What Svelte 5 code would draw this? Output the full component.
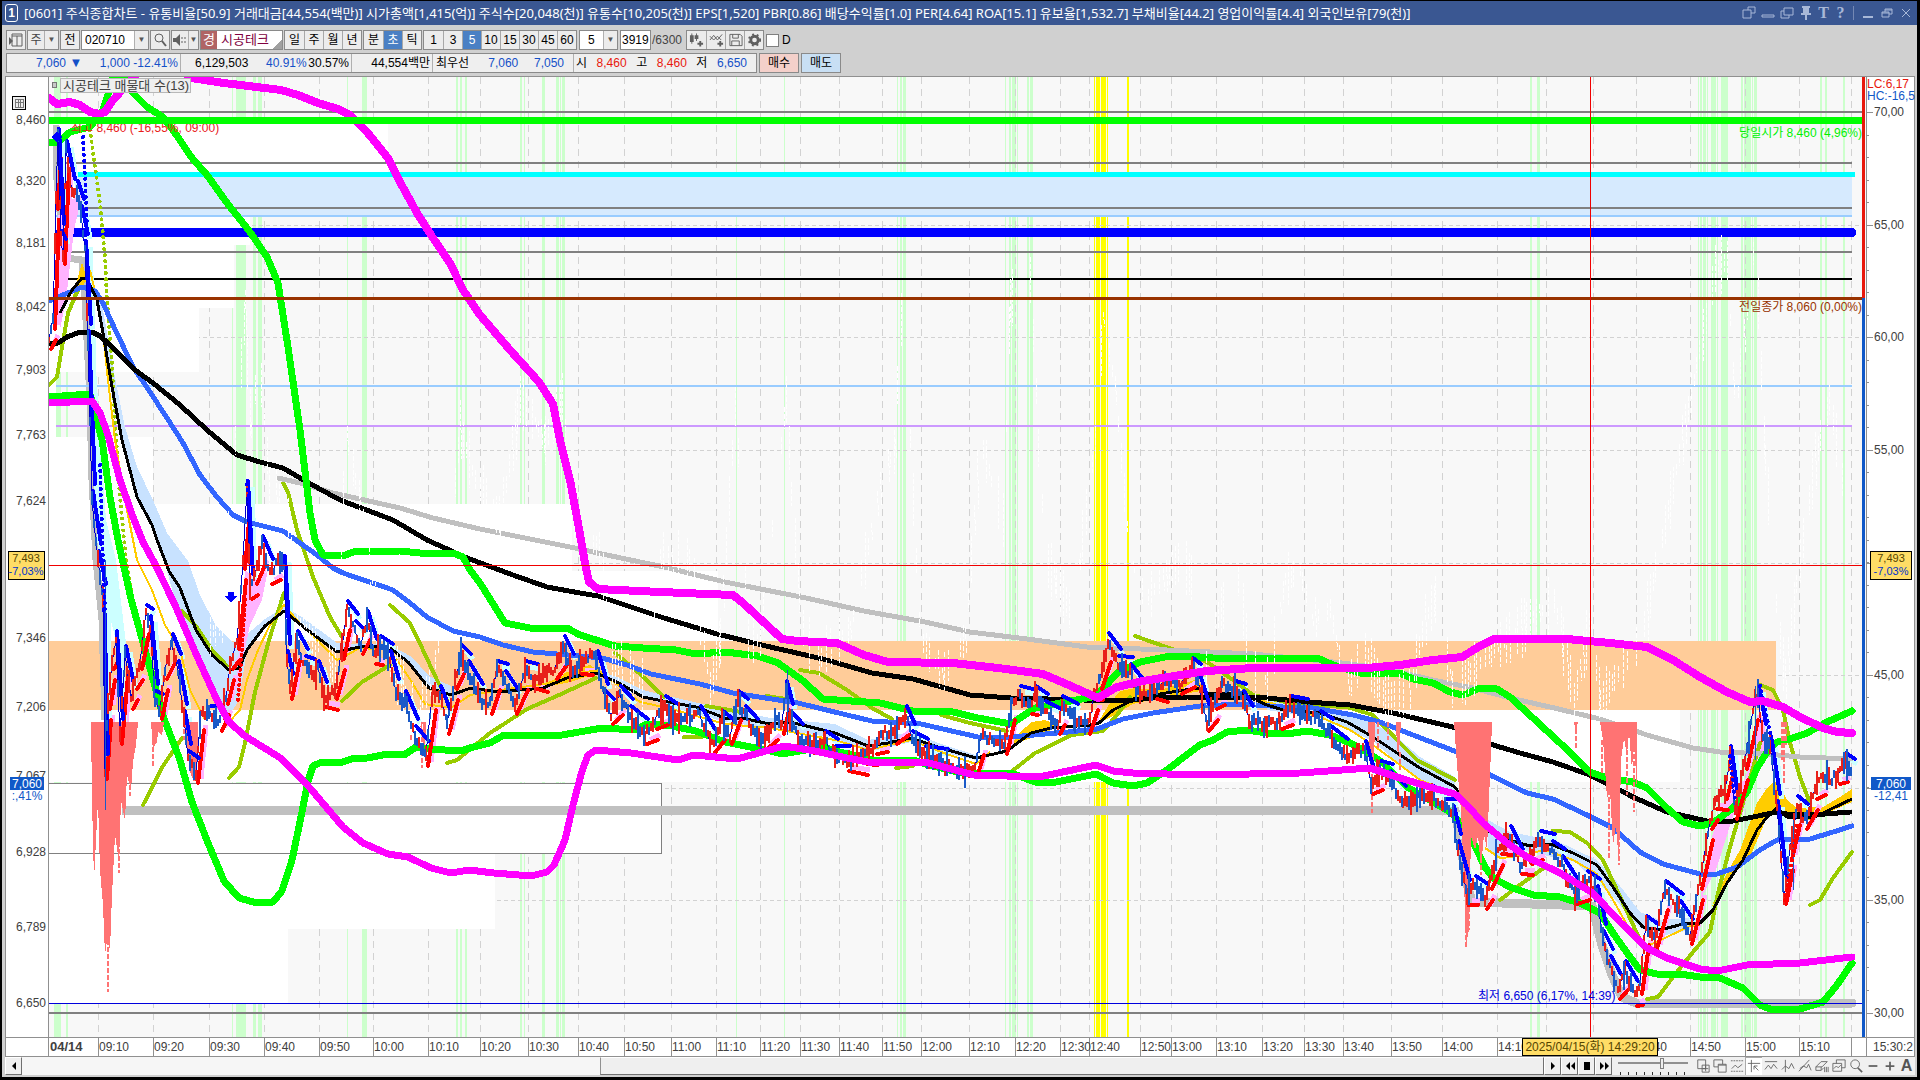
<script lang="ts">
	type Point = [number, number];

	const periods = ['일', '주', '월', '년'];
	const units = ['분', '초', '틱'];
	const steps = ['1', '3', '5', '10', '15', '30', '45', '60'];
	let unit = $state('초');
	let step = $state('5');

	const title =
		'[0601] 주식종합차트 - 유통비율[50.9] 거래대금[44,554(백만)] 시가총액[1,415(억)] 주식수[20,048(천)] 유통수[10,205(천)] EPS[1,520] PBR[0.86] 배당수익률[1.0] PER[4.64] ROA[15.1] 유보율[1,532.7] 부채비율[44.2] 영업이익률[4.4] 외국인보유[79(천)]';

	// x position of every time mark, with its label
	const times: [number, string][] = [
		[98, '09:10'], [153, '09:20'], [209, '09:30'], [264, '09:40'], [319, '09:50'], [373, '10:00'],
		[428, '10:10'], [480, '10:20'], [528, '10:30'], [578, '10:40'], [624, '10:50'], [671, '11:00'],
		[716, '11:10'], [760, '11:20'], [800, '11:30'], [839, '11:40'], [882, '11:50'], [921, '12:00'],
		[969, '12:10'], [1015, '12:20'], [1060, '12:30'], [1089, '12:40'], [1140, '12:50'], [1171, '13:00'],
		[1216, '13:10'], [1262, '13:20'], [1304, '13:30'], [1343, '13:40'], [1391, '13:50'], [1442, '14:00'],
		[1497, '14:10'], [1546, ''], [1593, ''], [1636, '14:40'], [1690, '14:50'], [1745, '15:00'],
		[1799, '15:10'], [1851, '']
	];

	const prices: [number, string][] = [
		[120, '8,460'], [181, '8,320'], [243, '8,181'], [307, '8,042'], [370, '7,903'], [435, '7,763'],
		[501, '7,624'], [638, '7,346'], [707, '7,206'], [776, '7,067'], [852, '6,928'],
		[927, '6,789'], [1003, '6,650']
	];

	const rates: [number, string][] = [
		[112, '70,00'], [225, '65,00'], [337, '60,00'], [450, '55,00'], [563, ''], [675, '45,00'],
		[788, ''], [900, '35,00'], [1013, '30,00']
	];
	const minorTicks = Array.from({ length: 40 }, (_, i) => 112 + Math.round(i * 22.5));

	// signal stripes: x, width
	const stripes: Point[] = [
		[54, 7], [66, 2], [232, 1], [236, 10], [253, 3], [258, 4], [347, 1], [362, 5], [456, 2], [460, 2],
		[465, 2], [520, 2], [524, 1], [542, 3], [556, 3], [560, 1], [562, 3], [736, 1], [784, 1], [897, 1],
		[900, 2], [903, 3], [1005, 1], [1009, 2], [1012, 4], [1017, 1], [1027, 2], [1030, 3], [1530, 2],
		[1537, 3], [1698, 1], [1700, 2], [1703, 3], [1707, 1], [1711, 5], [1717, 1], [1721, 7], [1741, 2],
		[1744, 7], [1752, 1], [1754, 3], [1820, 2], [1825, 2], [1843, 2]
	];
	const yellowStripes: Point[] = [[1094, 1], [1096, 4], [1101, 5], [1107, 1], [1127, 2]];

	// volume profile: top, bottom, right edge
	const profile: [number, number, number][] = [
		[124, 182, 388], [182, 245, 250], [245, 308, 234], [308, 372, 199], [372, 437, 56], [437, 504, 153],
		[504, 571, 572], [571, 641, 718], [710, 782, 1680], [853, 929, 495], [929, 1003, 288]
	];

	const upperBand =
		'49,98 57,104 70,102 80,105 90,112 100,114 105,112 113,100 122,90 140,70 180,70 191,78 224,83 281,90 298,95 318,103 338,109 350,115 367,132 388,158 400,182 417,213 433,238 450,263 463,290 480,315 510,350 539,382 553,404 560,440 570,480 578,523 585,563 589,582 598,589 639,591 684,593 733,595 743,603 782,639 798,641 837,643 864,655 888,662 953,663 998,668 1043,674 1064,683 1098,698 1117,687 1143,681 1187,674 1207,671 1253,668 1367,668 1400,665 1433,660 1462,657 1480,646 1494,639 1567,639 1610,643 1647,647 1673,660 1700,677 1727,692 1750,702 1763,701 1783,707 1800,717 1823,728 1837,732 1852,733';
	const lowerBand =
		'49,403 92,401 100,413 108,435 120,480 133,517 143,542 155,564 175,605 196,654 216,698 229,722 245,736 282,759 310,788 343,827 363,843 388,854 408,857 431,868 451,873 469,870 494,873 531,876 547,872 554,865 565,840 573,805 582,771 588,755 596,750 631,753 678,760 694,755 737,759 784,746 815,751 847,758 868,762 925,762 974,775 1039,777 1096,765 1113,771 1133,773 1200,775 1300,773 1370,768 1400,778 1433,788 1455,794 1467,805 1483,823 1507,843 1527,857 1560,873 1593,893 1620,922 1647,948 1667,958 1700,969 1717,971 1747,965 1800,963 1852,957';
	const upperGreen =
		'49,142 58,142 70,132 90,127 97,118 103,110 108,95 114,74 122,74 130,90 147,107 163,117 173,130 192,158 207,175 227,203 250,232 267,257 278,283 288,347 300,430 310,513 315,540 323,555 343,556 353,552 400,551 420,553 453,553 463,557 470,570 480,583 495,607 505,623 530,628 567,628 580,635 596,640 615,646 643,648 676,650 696,654 725,652 758,656 778,663 802,680 823,699 880,703 913,711 953,712 978,718 1011,724 1035,708 1060,703 1092,697 1103,689 1117,673 1140,662 1170,656 1200,657 1213,658 1320,659 1333,665 1360,673 1400,673 1413,679 1433,683 1450,692 1463,695 1480,688 1497,689 1510,697 1533,718 1560,743 1590,772 1607,778 1633,782 1647,788 1667,808 1683,822 1700,826 1713,823 1733,808 1747,792 1757,768 1767,752 1777,742 1790,739 1807,733 1827,722 1852,711';
	const lowerGreen =
		'49,397 90,394 95,413 102,440 110,497 118,540 131,599 147,657 163,716 180,760 192,802 208,843 224,881 239,898 253,902 273,902 282,891 292,860 302,812 308,781 313,766 322,762 339,763 355,758 367,758 388,754 404,755 416,747 429,749 461,751 473,747 490,743 504,735 562,735 602,728 635,730 647,724 672,726 696,731 725,742 766,750 782,754 823,747 843,753 872,760 913,760 929,765 962,773 1011,773 1035,782 1056,782 1096,774 1113,783 1133,786 1147,783 1167,770 1180,760 1200,745 1213,740 1227,732 1247,730 1267,733 1287,734 1307,731 1330,735 1350,743 1367,752 1383,763 1407,787 1433,802 1450,812 1460,822 1472,840 1485,867 1493,878 1510,887 1533,895 1560,897 1580,903 1600,913 1613,933 1630,957 1640,970 1657,974 1680,974 1700,977 1720,978 1743,988 1760,1005 1770,1009 1800,1009 1823,1002 1837,985 1852,963';
	const longAverage =
		'49,343 58,343 67,337 80,332 92,332 100,336 110,345 135,370 153,383 180,405 207,430 237,455 260,462 283,468 307,482 340,500 393,520 427,540 467,558 513,575 547,587 580,593 598,596 664,618 717,634 766,646 823,659 872,673 913,679 970,695 1011,698 1084,700 1133,700 1153,698 1187,697 1267,698 1307,702 1350,705 1393,713 1427,721 1457,728 1493,745 1520,753 1553,762 1590,775 1633,797 1667,812 1707,821 1733,821 1753,817 1777,812 1787,814 1813,815 1850,812';
	const midAverage =
		'49,301 63,295 82,287 95,291 103,303 113,325 133,367 150,392 167,418 183,443 200,475 217,497 233,515 247,522 283,531 317,555 333,568 343,573 393,590 410,603 427,617 453,631 480,637 503,645 533,652 580,656 602,658 627,665 651,674 700,684 733,693 798,703 847,715 872,721 921,724 978,737 1011,737 1068,732 1097,729 1123,719 1153,713 1200,706 1243,704 1283,707 1313,708 1353,715 1380,722 1413,735 1457,752 1490,775 1527,793 1553,799 1587,815 1613,828 1640,852 1663,864 1700,874 1717,874 1737,867 1760,850 1777,840 1810,839 1833,832 1852,826';
	const slowAverage =
		'278,478 300,483 333,493 400,508 433,518 480,529 580,549 602,554 664,567 725,582 806,598 864,611 925,622 970,632 1027,639 1087,647 1167,650 1253,654 1333,662 1383,668 1433,680 1473,688 1510,698 1550,707 1600,719 1647,735 1693,748 1720,752 1767,754 1800,757 1851,759';
	const fastAverage =
		'60,313 72,290 82,278 87,279 97,300 103,333 112,387 122,440 137,497 152,525 157,540 169,571 180,588 196,630 212,655 229,670 239,668 247,650 265,626 284,611 306,629 337,652 355,648 367,646 390,648 408,662 429,688 451,695 471,688 498,692 543,688 567,678 596,673 619,683 643,697 668,702 696,707 725,718 741,718 770,724 790,722 835,733 868,746 888,743 911,738 941,748 976,758 1007,751 1031,733 1051,728 1090,725 1099,723 1113,710 1133,700 1160,694 1197,688 1210,694 1240,693 1267,705 1283,710 1320,713 1347,722 1373,737 1400,755 1420,768 1455,787 1472,812 1490,832 1513,841 1530,846 1550,844 1573,853 1597,865 1613,887 1630,913 1643,927 1660,930 1687,923 1700,923 1713,910 1727,883 1743,860 1757,830 1767,817 1777,808 1787,817 1813,818 1833,808 1852,799';

	const cloudAreas = [
		'87,279 100,293 113,367 125,427 137,467 153,500 167,533 188,561 200,595 216,626 233,642 245,636 265,619 284,607 302,617 337,643 390,645 412,657 429,676 451,686 451,695 429,688 408,662 390,648 337,652 306,629 284,611 265,626 247,650 239,700 229,716 216,700 205,670 196,650 175,600 160,545 152,525 137,497 122,440 112,387 103,333 97,300',
		'596,670 619,678 643,690 668,696 725,709 770,718 835,724 868,740 911,732 941,744 976,755 976,760 941,752 911,742 868,752 835,738 770,728 725,722 668,706 619,688',
		'1267,698 1320,707 1373,722 1400,740 1420,757 1455,777 1455,792 1420,780 1400,765 1373,741 1320,718 1267,710',
		'1488,820 1510,832 1530,836 1555,840 1597,860 1617,882 1640,912 1660,920 1690,918 1690,930 1660,936 1640,928 1620,905 1600,885 1575,862 1530,852 1510,848 1500,858 1488,850'
	];
	const cloudTops = [
		'72,300 82,262 87,280',
		'540,688 567,672 590,665 600,672 570,682',
		'1011,745 1020,732 1032,722 1045,720 1060,726 1051,730 1031,738',
		'1097,724 1110,703 1120,691 1135,688 1160,690 1195,680 1208,690 1195,692 1160,698 1133,704 1113,716',
		'1710,910 1727,873 1740,850 1757,803 1767,788 1773,782 1779,783 1787,800 1797,808 1823,807 1840,797 1852,789 1852,802 1823,815 1810,820 1780,812 1767,817 1750,857 1728,880'
	];
	const yellowLines = [
		'90,270 97,300 103,333 108,380 115,440 125,500 137,560 152,590 165,625 180,650 190,690 205,720',
		'229,722 240,710 247,680 258,650 270,625 284,605 297,620 337,660 360,648 390,650 408,676 425,704 451,708 470,695 500,690 545,684 575,674 598,670 640,702 668,708 725,724 770,728 835,740 868,750 911,740 941,752 976,764 990,752',
		'1260,700 1320,717 1350,730 1373,745 1400,765 1420,780 1440,788',
		'1485,848 1500,858 1513,857 1545,850 1573,860 1597,874 1613,900 1630,930 1645,947 1665,938 1690,926 1700,925'
	];
	const dottedOlive = '90,130 100,203 105,257 107,300 112,363 115,423 120,497 126,560 131,590';
	const oliveLines = [
		'49,385 57,377 62,347 68,313 78,290',
		'143,805 163,766 182,738',
		'182,611 196,626 212,650 227,666',
		'229,778 239,767 245,743 255,692 269,640 284,593',
		'283,483 288,492 297,530 313,577 330,617 342,637',
		'342,701 362,682 390,665',
		'390,605 410,623 423,650 437,680 447,700',
		'447,763 457,760 490,733 527,709 559,695 596,678',
		'615,653 639,673 664,697',
		'684,737 702,737',
		'706,706 741,712',
		'766,696 786,699',
		'800,670 819,673 847,690 872,708 892,719',
		'896,768 913,766',
		'941,715 970,723 1007,731',
		'1011,772 1035,753 1072,735 1103,731 1117,715 1130,697',
		'1135,636 1172,649 1207,662 1233,680 1253,695 1300,705 1347,707 1373,715 1400,743 1417,760 1455,780',
		'1500,900 1517,887 1545,867',
		'1553,831 1570,832 1587,843 1603,860 1617,890 1640,940',
		'1647,999 1658,997 1673,977 1693,952 1710,932 1718,893 1730,847 1743,803 1760,743',
		'1760,685 1773,690 1783,710 1790,743 1800,777 1810,803',
		'1810,905 1820,900 1833,878 1852,852'
	];

	const redAreas = [
		'91,722 138,722 136,745 133,762 131,790 127,775 125,820 121,800 119,862 115,835 112,895 110,950 107,940 105,955 103,905 100,870 98,800 96,840 94,880 92,800',
		'151,722 164,722 162,735 158,732 157,742 153,748',
		'185,722 198,722 197,776 194,782 190,772 187,750',
		'420,722 426,722 425,746 422,740',
		'1368,722 1375,722 1374,762 1370,765',
		'1396,722 1401,722 1399,753 1397,750',
		'1454,722 1492,722 1491,750 1489,800 1487,850 1484,834 1481,868 1478,836 1475,850 1471,836 1469,929 1466,945 1464,880 1461,810 1457,765',
		'1574,722 1578,722 1576,732',
		'1600,722 1637,722 1637,792 1634,740 1632,770 1629,732 1627,755 1624,738 1621,760 1619,864 1616,825 1613,845 1610,790 1607,798 1603,740'
	];
	const redTails: [number, number, number][] = [
		[94, 800, 850], [107, 940, 992], [118, 800, 873], [129, 750, 796], [152, 740, 766], [183, 722, 740],
		[410, 735, 740], [421, 730, 768], [1371, 760, 813], [1377, 722, 750], [1387, 722, 740], [1399, 752, 770],
		[1465, 900, 948], [1468, 900, 930], [1480, 830, 875], [1575, 722, 748], [1601, 740, 775], [1608, 790, 860],
		[1618, 800, 865], [1626, 750, 795], [1633, 740, 812], [1781, 722, 760], [1783, 722, 785], [1785, 722, 745]
	];

	const silverTrail = '56,125 57,180 62,232 66,258 82,260 85,300 90,400 92,480 96,560 102,620 105,720';
	const silverSteps = '1455,810 1460,840 1466,880 1472,902 1592,906 1602,945 1612,975 1622,997 1636,1003 1852,1003';

	const pivots: Point[] = [
		[49, 340], [53, 320], [56, 200], [58, 138], [61, 240], [63, 255], [66, 150], [72, 195], [77, 190],
		[81, 215], [85, 250], [88, 340], [92, 500], [98, 560], [103, 600], [105, 770], [108, 700], [112, 660],
		[116, 640], [120, 735], [125, 655], [131, 700], [135, 680], [140, 660], [146, 614], [150, 625],
		[155, 700], [160, 710], [165, 670], [172, 643], [178, 670], [184, 720], [188, 760], [196, 774],
		[201, 710], [210, 715], [220, 722], [226, 695], [231, 660], [237, 640], [243, 560], [247, 490],
		[250, 590], [255, 575], [262, 545], [270, 575], [278, 560], [284, 565], [287, 660], [290, 690],
		[297, 640], [305, 665], [312, 675], [318, 670], [324, 698], [335, 690], [342, 650], [347, 610],
		[355, 630], [361, 645], [367, 620], [374, 655], [380, 645], [390, 660], [396, 695], [405, 700],
		[415, 735], [426, 757], [433, 690], [440, 695], [447, 725], [455, 680], [461, 654], [468, 670],
		[480, 700], [490, 705], [497, 670], [505, 680], [515, 705], [525, 670], [535, 680], [545, 672],
		[555, 670], [564, 645], [571, 670], [580, 665], [590, 655], [597, 660], [605, 700], [611, 715],
		[620, 695], [630, 715], [645, 735], [655, 720], [665, 705], [675, 720], [690, 715], [700, 715],
		[712, 745], [722, 720], [730, 735], [738, 700], [745, 715], [755, 735], [765, 740], [775, 720],
		[782, 725], [786, 690], [790, 720], [800, 740], [812, 745], [825, 740], [835, 755], [847, 762],
		[865, 755], [875, 745], [885, 732], [895, 735], [906, 715], [912, 740], [925, 755], [945, 765],
		[965, 770], [975, 768], [981, 735], [990, 740], [1005, 745], [1012, 700], [1020, 695], [1030, 705],
		[1035, 695], [1045, 710], [1058, 725], [1062, 705], [1075, 720], [1088, 725], [1095, 690],
		[1100, 680], [1108, 642], [1118, 665], [1130, 673], [1140, 695], [1155, 690], [1165, 682],
		[1180, 685], [1192, 667], [1198, 680], [1207, 722], [1215, 700], [1222, 685], [1235, 690],
		[1243, 700], [1250, 722], [1265, 725], [1280, 720], [1290, 705], [1305, 715], [1320, 720],
		[1330, 735], [1345, 755], [1365, 750], [1371, 785], [1380, 770], [1390, 780], [1403, 802],
		[1420, 798], [1432, 795], [1445, 808], [1453, 815], [1458, 850], [1467, 896], [1475, 885],
		[1485, 900], [1490, 880], [1500, 845], [1510, 835], [1520, 865], [1530, 855], [1540, 840],
		[1552, 850], [1562, 865], [1575, 895], [1587, 880], [1597, 895], [1603, 940], [1610, 965],
		[1618, 990], [1625, 970], [1635, 997], [1640, 985], [1646, 925], [1655, 940], [1665, 890],
		[1680, 910], [1690, 935], [1700, 880], [1710, 820], [1715, 800], [1725, 790], [1730, 755],
		[1735, 810], [1745, 760], [1755, 700], [1758, 695], [1763, 740], [1770, 745], [1777, 810],
		[1784, 895], [1790, 850], [1797, 805], [1805, 820], [1815, 790], [1823, 775], [1830, 780],
		[1838, 775], [1845, 762], [1852, 775]
	];

	const noisePivots: Point[] = [
		[207, 640], [222, 620], [232, 480], [245, 310], [252, 430], [258, 350], [270, 490], [285, 500],
		[300, 620], [320, 650], [335, 670], [347, 440], [360, 500], [380, 640], [400, 680], [420, 720],
		[440, 640], [460, 430], [475, 480], [500, 520], [520, 400], [545, 440], [562, 400], [575, 530],
		[600, 550], [612, 660], [645, 690], [660, 560], [692, 560], [710, 690], [720, 640], [736, 390],
		[748, 640], [760, 640], [775, 500], [786, 400], [800, 620], [815, 660], [850, 630], [865, 560],
		[882, 480], [895, 450], [901, 320], [910, 440], [920, 640], [942, 675], [965, 640], [980, 440],
		[1003, 520], [1010, 300], [1030, 280], [1045, 560], [1070, 610], [1080, 560], [1095, 440],
		[1103, 320], [1115, 390], [1130, 560], [1145, 600], [1180, 560], [1200, 590], [1207, 690],
		[1215, 620], [1240, 580], [1250, 680], [1268, 680], [1285, 580], [1300, 570], [1312, 620],
		[1330, 610], [1345, 690], [1365, 650], [1385, 700], [1410, 690], [1425, 620], [1435, 600],
		[1453, 690], [1494, 650], [1555, 600], [1574, 700], [1590, 620], [1600, 700], [1641, 640],
		[1670, 500], [1700, 350], [1715, 270], [1727, 260], [1735, 420], [1755, 235], [1765, 460],
		[1780, 640], [1785, 680], [1800, 560], [1815, 460], [1830, 400], [1845, 500]
	];

	function makeRandom(seed: number) {
		let s = seed;
		return () => {
			s = (s * 16807) % 2147483647;
			return s / 2147483647;
		};
	}

	// walk the pivots at a fixed step
	function walk(points: Point[], stepX: number, visit: (x: number, y: number, rising: boolean) => void) {
		for (let i = 1; i < points.length; i++) {
			const [x0, y0] = points[i - 1];
			const [x1, y1] = points[i];
			for (let x = x0; x < x1; x += stepX) {
				visit(x, y0 + ((y1 - y0) * (x - x0)) / (x1 - x0), y1 < y0);
			}
		}
	}

	function buildCandles() {
		const random = makeRandom(710);
		let up = '';
		let down = '';
		let close = '';
		walk(pivots, 2, (x, y, rising) => {
			const size = 3 + random() * random() * 14;
			const mid = y + (random() - 0.5) * 8;
			const bar = `M${x} ${Math.round(mid - size)}V${Math.round(mid + size)}`;
			if (random() < (rising ? 0.7 : 0.4)) up += bar;
			else down += bar;
			close += `${x},${Math.round(mid)} `;
		});
		return { up, down, close };
	}

	function buildNoise() {
		const random = makeRandom(14);
		let d = '';
		walk(noisePivots, 3, (x, y) => {
			if (random() > 0.25) {
				const len = 10 + random() * 50;
				d += `M${x} ${Math.round(y - len / 2)}l${Math.round(random() * 3 - 1)} ${Math.round(len)}`;
			}
		});
		return d;
	}

	// thick stop lines that follow the price: red below a rise, blue above a fall
	function buildTrails() {
		let rising = '';
		let falling = '';
		let pink = '';
		let cyan = '';
		for (let i = 1; i < pivots.length; i++) {
			const [x0, y0] = pivots[i - 1];
			const [x1, y1] = pivots[i];
			if (Math.abs(y1 - y0) < 7) continue;
			if (y1 < y0) {
				rising += `M${x0 + 2} ${y0 + 9}L${x1 + 3} ${y1 + 20}`;
				pink += `M${x0 + 5} ${y0 + 5}L${x1 + 5} ${y1 + 15}`;
			} else {
				falling += `M${x0 + 1} ${y0 - 9}L${x1 + 3} ${y1 - 16}`;
				cyan += `M${x0 + 5} ${y0 - 3}L${x1 + 5} ${y1 - 11}`;
			}
		}
		return { rising, falling, pink, cyan };
	}

	const candles = buildCandles();
	const trails = buildTrails();
	const noise = buildNoise();
</script>

<div class="frame">
	<header class="titlebar">
		<span class="badge">1</span>
		<h1>{title}</h1>
		<div class="window-tools">
			<button aria-label="새 창"><svg viewBox="0 0 16 16"><path d="M2 5h8v8H2zM7 5V2h7v6h-4" /></svg></button>
			<button aria-label="접기"><svg viewBox="0 0 16 16"><path d="M2 10h12v2H2z" /></svg></button>
			<button aria-label="복사"><svg viewBox="0 0 16 16"><path d="M5 3h9v7H5zM5 6H2v7h8v-3" /></svg></button>
			<button aria-label="고정"><svg viewBox="0 0 16 16"><path class="solid" d="M4 1h8v2h-1v5h2v2H3V8h2V3H4zM7 10h2v5H7z" /></svg></button>
			<button class="glyph">T</button>
			<button class="glyph">?</button>
			<i></i>
			<button aria-label="최소화"><svg viewBox="0 0 16 16"><path class="solid" d="M3 11h10v2H3z" /></svg></button>
			<button aria-label="복원"><svg viewBox="0 0 16 16"><path d="M3 7h7v5H3zM6 7V4h7v5h-3M3 8h7M6 5h7" /></svg></button>
			<button aria-label="닫기"><svg viewBox="0 0 16 16"><path d="M4 4l8 8M12 4l-8 8" /></svg></button>
		</div>
	</header>

	<div class="body">
		<div class="toolbar">
			<button class="tool" aria-label="패널"><svg viewBox="0 0 16 16"><path d="M4 2h10v12H4zM9 4v10M4 4h10" /><path class="solid" d="M1 5l4 4-4 4z" /></svg></button>
			<div class="combo market"><span>주</span><button aria-label="시장 선택">▼</button></div>
			<button class="tool">전</button>
			<div class="combo code"><input aria-label="종목코드" value="020710" /><button aria-label="종목 목록">▼</button></div>
			<button class="tool" aria-label="검색"><svg viewBox="0 0 16 16"><circle cx="7" cy="6" r="4" /><path d="M10 9l4 5" stroke-width="2" /></svg></button>
			<div class="combo sound"><svg viewBox="0 0 16 16"><path class="solid" d="M1 6h3l4-4v12l-4-4H1z" /><path d="M10 5v6M13 5v6" stroke-dasharray="2 2" /></svg><button aria-label="소리">▼</button></div>
			<div class="stock"><b>경</b><span>시공테크</span></div>
			<div class="group">
				{#each periods as p}<button>{p}</button>{/each}
			</div>
			<div class="group">
				{#each units as u}<button class:on={unit === u} onclick={() => (unit = u)}>{u}</button>{/each}
			</div>
			<div class="group">
				{#each steps as s}<button class:on={step === s} onclick={() => (step = s)}>{s}</button>{/each}
			</div>
			<div class="combo count"><input aria-label="주기" value="5" /><button aria-label="주기 선택">▼</button></div>
			<input class="bars" aria-label="조회 봉수" value="3919" />
			<span class="total">/6300</span>
			<div class="group icons">
				<button aria-label="봉 추가"><svg viewBox="0 0 16 16"><path d="M3 1v11M8 1v8" /><path class="solid" d="M1 3h4v7H1zM6 3h4v4H6z" /><path d="M12 9v6M9 12h6" stroke-width="2" /></svg></button>
				<button aria-label="지표 추가"><svg viewBox="0 0 16 16"><path d="M1 8l4-5 4 5 5-6M1 4l4 4 4-4 4 4" /><path d="M12 9v6M9 12h6" stroke-width="2" /></svg></button>
				<button aria-label="저장"><svg viewBox="0 0 16 16"><path d="M2 2h11l2 2v10H2zM5 2v4h6V2M4 14V9h8v5" /></svg></button>
				<button aria-label="설정"><svg viewBox="0 0 16 16"><circle cx="8" cy="8" r="4" stroke-width="3" /><circle cx="8" cy="8" r="6" stroke-width="2" stroke-dasharray="2 3" /></svg></button>
			</div>
			<label class="check"><input type="checkbox" />D</label>
		</div>

		<div class="quote">
			<div class="cells">
				<span class="cell change"><em>7,060</em><em class="arrow">▼</em><em class="diff">1,000</em><em>-12.41%</em></span>
				<span class="cell volume"><span>6,129,503</span><em class="ratio">40.91%</em><span>30.57%</span></span>
				<span class="cell amount">44,554백만</span>
				<span class="cell best">최우선 <em>7,060</em> <em>7,050</em></span>
				<span class="cell ohl">시 <strong>8,460</strong> 고 <strong>8,460</strong> 저 <em>6,650</em></span>
			</div>
			<button class="buy">매수</button>
			<button class="sell">매도</button>
		</div>

		<svg class="chart" viewBox="5 76 1910 981" role="img" aria-label="시공테크 차트">
			<rect x="5" y="76" width="1910" height="981" fill="#fff" />
			<rect x="49" y="77" width="1817" height="960" fill="#f8f8f8" />

			<g shape-rendering="crispEdges">
				{#each stripes as [x, w]}<rect {x} y="77" width={w} height="960" fill="#ccffcc" />{/each}
				{#each yellowStripes as [x, w]}<rect {x} y="77" width={w} height="960" fill="#ffff00" />{/each}
				<g stroke="#d2d2d2" stroke-dasharray="7 5">
					{#each times as [x]}<path d="M{x + 0.5} 77V1037" />{/each}
				</g>
				<g stroke="#d2d2d2" stroke-dasharray="4 3">
					{#each rates as [y]}<path d="M49 {y + 0.5}H1862" />{/each}
				</g>

				{#each profile as [top, bottom, right]}
					<rect x="49" y={top} width={right - 49} height={bottom - top} fill="#fff" />
				{/each}
				<rect x="49" y="641" width="1727" height="69" fill="#ffcc99" />
				<rect x="48.5" y="783.5" width="613" height="70" fill="#fff" stroke="#808080" />
				<rect x="75" y="177" width="1777" height="39" fill="#d6eafe" />
			</g>

			<g fill="none" shape-rendering="crispEdges">
				<path d="M122 810.5H1458" stroke="#c0c0c0" stroke-width="9" />
				<polyline points={silverTrail} stroke="#c0c0c0" stroke-width="7" />
				<polyline points={silverSteps} stroke="#c0c0c0" stroke-width="9" stroke-linecap="round" />
			</g>

			<g fill="none" shape-rendering="crispEdges" stroke-width="2">
				<path d="M49 112H1862" stroke="#808080" />
				<path d="M56 163H1852M56 208H1852M56 252H1852M49 1013H1862" stroke="#808080" />
				<path d="M70 174.5H1853" stroke="#00ffff" stroke-width="5" stroke-linecap="round" />
				<path d="M56 216H1852M56 386H1852" stroke="#99ccff" />
				<path d="M60 232.5H1852" stroke="#0000ff" stroke-width="9" stroke-linecap="round" />
				<path d="M56 426H1852" stroke="#cc99ff" />
				<path d="M56 279H1852" stroke="#000" />
			</g>

			<g shape-rendering="crispEdges">
				{#each cloudAreas as points}<polygon {points} fill="#c8e2ff" />{/each}
				{#each cloudTops as points}<polygon {points} fill="#ffcc00" />{/each}
				<polygon points="90,290 98,400 106,520 116,560 128,660 118,650 106,600 97,540 91,380" fill="#ccffff" />
				<polygon points="245,570 258,580 268,570 262,600 250,625 236,690 240,640" fill="#ffb3ff" />
				<polygon points="1700,900 1714,830 1728,790 1745,780 1762,715 1768,740 1750,790 1735,810 1716,870" fill="#ffb3ff" />
				<polygon points="60,260 70,200 82,195 74,230 66,300 60,330" fill="#ffb3ff" />
			</g>

			<g fill="none" shape-rendering="crispEdges" stroke-linejoin="round">
				<path d={trails.pink} stroke="#ffb3ff" stroke-width="5" />
				<path d={trails.cyan} stroke="#ccffff" stroke-width="5" />
				{#each oliveLines as points}<polyline {points} stroke="#99cc00" stroke-width="4" stroke-linecap="round" />{/each}
				<polyline points={dottedOlive} stroke="#99cc00" stroke-width="4" stroke-linecap="round" stroke-dasharray="0 6" />
				{#each yellowLines as points}<polyline {points} stroke="#ffcc00" stroke-width="2" />{/each}
				<polyline points={slowAverage} stroke="#c0c0c0" stroke-width="5" stroke-linecap="round" />
				<polyline points={midAverage} stroke="#3366ff" stroke-width="5" stroke-linecap="round" />
				<polyline points={longAverage} stroke="#000" stroke-width="5" stroke-linecap="round" />
				<polyline points={fastAverage} stroke="#000" stroke-width="3" />
			</g>

			<g fill="none" shape-rendering="crispEdges">
				<polyline points={upperGreen} stroke="#00ff00" stroke-width="7" stroke-linejoin="round" stroke-linecap="round" />
				<polyline points={lowerGreen} stroke="#00ff00" stroke-width="7" stroke-linejoin="round" stroke-linecap="round" />
			</g>

			<g shape-rendering="crispEdges">
				{#each redAreas as points}<polygon {points} fill="#ff7373" />{/each}
				{#each redTails as [x, top, bottom]}<path d="M{x + 0.5} {top}V{bottom}" stroke="#ff7373" stroke-width="2" stroke-dasharray="5 2" />{/each}
				<path d={noise} stroke="#fff" fill="none" stroke-dasharray="5 2" />
			</g>

			<g fill="none" shape-rendering="crispEdges">
				<path d={trails.rising} stroke="#ff0000" stroke-width="4" stroke-linecap="round" />
				<path d={trails.falling} stroke="#0000ff" stroke-width="4" stroke-linecap="round" />
				<polyline points={candles.close} stroke="#0000cc" />
				<path d={candles.up} stroke="#e8201a" stroke-width="2" />
				<path d={candles.down} stroke="#1a5ac8" stroke-width="2" />
				<path d="M105 560V810M787 670V735M1755 686V760M1793 820V890" stroke="#1a5ac8" />
				<path d="M83 137L85 175L87 225M100 465L103 560L105 610M247 484L250 510L252 560M1730 756L1735 800M1760 686L1774 750" stroke="#0000ff" stroke-width="4" stroke-linecap="round" stroke-dasharray="0 6" />
				<path d="M245 600L242 650L238 700M1785 900L1792 860L1797 825" stroke="#ff0000" stroke-width="4" stroke-linecap="round" stroke-dasharray="0 5" />
				<path d="M53 137l4-4 4 4-4 4zM229 593h4v4h2l-4 4-4-4h2z" stroke="#0000ff" stroke-width="2" fill="#0000ff" />
				<polyline points={upperBand} stroke="#ff00ff" stroke-width="8" stroke-linejoin="round" stroke-linecap="round" />
				<polyline points={lowerBand} stroke="#ff00ff" stroke-width="7" stroke-linejoin="round" stroke-linecap="round" />
			</g>

			<text x="71" y="132" fill="#e8201a">최고 8,460 (-16,55%, 09:00)</text>

			<g fill="none" shape-rendering="crispEdges">
				<path d="M49 120.5H1862" stroke="#00ff00" stroke-width="7" />
				<path d="M49 298.5H1862" stroke="#993300" stroke-width="3" />
				<path d="M49 1003.5H1862" stroke="#0000dd" />
				<path d="M49 565.5H1862M1590.5 77V1037" stroke="#f00000" />
			</g>

			<text x="1862" y="137" fill="#00f000" text-anchor="end">당일시가 8,460 (4,96%)</text>
			<text x="1862" y="311" fill="#993300" text-anchor="end">전일종가 8,060 (0,00%)</text>
			<text x="1478" y="1000" fill="#0000dd">최저 6,650 (6,17%, 14:39)</text>

			<g shape-rendering="crispEdges" fill="none">
				<rect x="1866" y="77" width="48" height="979" fill="#fff" />
				<rect x="5" y="77" width="43" height="979" fill="#fff" />
				<rect x="1862" y="77" width="3" height="221" fill="#e8180c" />
				<rect x="1862" y="298" width="3" height="739" fill="#1058c8" />
				<rect x="6" y="1037" width="1908" height="20" fill="#fff" />
				<path d="M5 76.5H1914.5V1056.5H5.5V76.5M48.5 77V1056M1866.5 77V1056M5 1037.5H1914" stroke="#909090" />
				{#each times as [x]}<path d="M{x + 0.5} 1037V1056" stroke="#909090" />{/each}
				{#each rates as [y]}<path d="M1866 {y + 0.5}H1873" stroke="#909090" />{/each}
				{#each minorTicks as y}<path d="M1866 {y + 0.5}H1869" stroke="#909090" />{/each}
			</g>

			<g fill="#404040">
				{#each prices as [y, label]}<text x="46" y={y + 4} text-anchor="end">{label}</text>{/each}
				{#each rates as [y, label]}<text x="1874" y={y + 4}>{label}</text>{/each}
				{#each times as [x, label]}<text x={x + 1} y="1051">{label}</text>{/each}
				<text x="50" y="1051" class="date">04/14</text>
				<text x="1873" y="1051">15:30:2</text>
			</g>
			<text x="1867" y="88" fill="#e8180c">LC:6,17</text>
			<text x="1867" y="100" fill="#1058c8">HC:-16,5</text>

			<g shape-rendering="crispEdges">
				<rect x="60.5" y="78.5" width="130" height="14" fill="#efefef" stroke="#b8b8b8" />
				<rect x="52.5" y="82.5" width="4" height="5" fill="#c8c8c8" stroke="#777" />
				<rect x="12.5" y="96.5" width="13" height="13" fill="#eee" stroke="#000" />
				<path d="M15 99.5h9M15 102.5h9M15 107.5h9M15.5 99v9M18.5 99v9M20.5 99v9M23.5 99v9" stroke="#777" />
				<rect x="8.5" y="551.5" width="36" height="28" fill="#ffdd66" stroke="#000" />
				<rect x="1870.5" y="551.5" width="41" height="28" fill="#ffdd66" stroke="#000" />
				<rect x="10" y="777" width="34" height="13" fill="#1058c8" />
				<rect x="1871" y="777" width="40" height="13" fill="#1058c8" />
				<rect x="10" y="790" width="37" height="12" fill="#fff" />
				<rect x="1522.5" y="1038.5" width="135" height="17" fill="#ffdd66" stroke="#000" />
			</g>
			<text x="63" y="90" fill="#404040" class="legend">시공테크 매물대 수(13)</text>
			<text x="26" y="562" text-anchor="middle" fill="#554400" class="small">7,493</text>
			<text x="26" y="575" text-anchor="middle" fill="#0033cc" class="small">-7,03%</text>
			<text x="1891" y="562" text-anchor="middle" fill="#554400" class="small">7,493</text>
			<text x="1891" y="575" text-anchor="middle" fill="#0033cc" class="small">-7,03%</text>
			<text x="27" y="788" text-anchor="middle" fill="#fff">7,060</text>
			<text x="27" y="800" text-anchor="middle" fill="#1058c8">:,41%</text>
			<text x="1891" y="788" text-anchor="middle" fill="#fff">7,060</text>
			<text x="1891" y="800" text-anchor="middle" fill="#1058c8">-12,41</text>
			<text x="1590" y="1051" text-anchor="middle" fill="#554400">2025/04/15(화) 14:29:20</text>
		</svg>

		<footer class="bottom">
			<button class="raised" aria-label="왼쪽으로"><svg viewBox="0 0 16 16"><path class="dark" d="M10 4v8L6 8z" /></svg></button>
			<div class="track"><div class="thumb"></div></div>
			<button class="raised" aria-label="재생"><svg viewBox="0 0 16 16"><path class="dark" d="M6 4v8l4-4z" /></svg></button>
			<button class="raised" aria-label="뒤로"><svg viewBox="0 0 16 16"><path class="dark" d="M8 4v8L4 8zM13 4v8L9 8z" /></svg></button>
			<button class="raised" aria-label="정지"><svg viewBox="0 0 16 16"><path class="dark" d="M5 4h6v8H5z" /></svg></button>
			<button class="raised" aria-label="앞으로"><svg viewBox="0 0 16 16"><path class="dark" d="M4 4v8l4-4zM9 4v8l4-4z" /></svg></button>
			<div class="speed"><input type="range" aria-label="재생 속도" min="0" max="100" value="63" /></div>
			<div class="draw-tools">
				<button aria-label="창 추가"><svg viewBox="0 0 16 16"><path d="M2 1h9v10H2zM7 7h8v8H7zM11 8v6M8 11h6" /></svg></button>
				<button aria-label="창 겹치기"><svg viewBox="0 0 16 16"><path d="M1 1h10v8H1z" /><path d="M6 6h9v9H6zM6 7h9" fill="#f0f0f0" /></svg></button>
				<button aria-label="영역"><svg viewBox="0 0 16 16"><path d="M1 2h14M1 14h14" stroke-dasharray="2 1" /><path d="M2 11l4-4 3 3 5-4" /></svg></button>
				<button class="pressed" aria-label="십자선"><svg viewBox="0 0 16 16"><path d="M1 5h14M5 1v14M8 8h4M8 8v4M8 8l5 5" /></svg></button>
				<button aria-label="수평선"><svg viewBox="0 0 16 16"><path d="M1 3h14M1 12l4-5 3 4 3-5 4 5" /></svg></button>
				<button aria-label="수직선"><svg viewBox="0 0 16 16"><path d="M5 1v14M1 12l4-4 4 3 3-6 3 6" /></svg></button>
				<button aria-label="추세선"><svg viewBox="0 0 16 16"><path d="M1 14L13 1M2 11l4-3 4 2 2-4 3 7" /></svg></button>
				<button aria-label="지우개"><svg viewBox="0 0 16 16"><path d="M1 9l6-6h7l-6 6zM1 9v4h6V9M7 13l3-3M11 9v6M13 9v6M15 9v6" /></svg></button>
				<button aria-label="차트 저장"><svg viewBox="0 0 16 16"><path d="M5 5V1h10v9h-4M1 5h10v9H1zM2 11l3-3 2 2 3-3" /></svg></button>
				<button aria-label="돋보기"><svg viewBox="0 0 16 16"><circle cx="7" cy="6" r="5" /><path d="M10 10l5 5" stroke-width="2" /></svg></button>
				<button aria-label="축소"><svg viewBox="0 0 16 16"><path d="M3 8h10" stroke-width="2" /></svg></button>
				<button aria-label="확대"><svg viewBox="0 0 16 16"><path d="M3 8h10M8 3v10" stroke-width="2" /></svg></button>
				<button class="letter">A</button>
			</div>
		</footer>
	</div>
</div>

<style>
	:global(body) {
		margin: 0;
		background: #000;
	}

	.frame {
		padding: 1px 3px 3px 2px;
		background: #000;
		font-family: 'Liberation Sans', 'Noto Sans CJK KR', sans-serif;
		font-size: 12px;
		line-height: 16px;
		color: #000;
	}

	button,
	input {
		font: inherit;
		color: inherit;
		margin: 0;
		padding: 0;
		box-sizing: border-box;
		border: 0;
		border-radius: 0;
	}

	button {
		display: flex;
		align-items: center;
		justify-content: center;
		background: none;
	}

	button svg,
	.sound svg {
		width: 16px;
		height: 16px;
		fill: none;
		stroke: #606060;
		flex: none;
	}

	.solid {
		fill: #606060;
		stroke: none;
	}

	.dark {
		fill: #000;
		stroke: none;
	}

	em,
	strong {
		font-style: normal;
		font-weight: normal;
	}

	/* title bar */
	.titlebar {
		display: flex;
		align-items: center;
		height: 24px;
		padding: 0 2px 0 3px;
		background: #3a5792;
		color: #fff;
	}

	.badge {
		width: 11px;
		height: 16px;
		border: 1px solid #fff;
		border-radius: 3px;
		text-align: center;
		font-weight: bold;
	}

	h1 {
		flex: 1;
		margin: 0 0 0 6px;
		font-family: 'Noto Sans', 'Noto Sans CJK KR', sans-serif;
		font-size: 13px;
		font-weight: normal;
		white-space: nowrap;
		overflow: hidden;
	}

	.window-tools {
		display: flex;
		align-items: center;
	}

	.window-tools button {
		width: 19px;
		height: 20px;
		color: #a8b8d8;
	}

	.window-tools svg {
		stroke: #a8b8d8;
	}

	.window-tools .solid {
		fill: #a8b8d8;
	}

	.window-tools .glyph {
		width: 17px;
		font-family: 'Liberation Serif', serif;
		font-size: 16px;
		font-weight: bold;
	}

	.window-tools i {
		width: 1px;
		height: 14px;
		margin: 0 4px;
		background: #7488b4;
	}

	/* toolbar */
	.body {
		padding: 5px 2px 2px 3px;
		background: #d0d0d0;
	}

	.toolbar {
		display: flex;
		gap: 1px;
		height: 20px;
		padding-left: 1px;
	}

	.toolbar > * {
		box-sizing: border-box;
		flex: none;
	}

	.tool,
	.combo,
	.stock,
	.group,
	.bars {
		border: 1px solid #8a8a8a;
		background: #ececec;
	}

	.tool {
		width: 20px;
	}

	.combo {
		display: flex;
		align-items: center;
	}

	.combo > span {
		flex: 1;
		text-align: center;
		color: #444;
	}

	.combo > input {
		flex: 1;
		min-width: 0;
		height: 100%;
		padding-left: 3px;
		background: #fff;
	}

	.combo > button {
		width: 14px;
		height: 100%;
		border-left: 1px solid #b0b0b0;
		font-size: 8px;
		color: #555;
	}

	.market {
		width: 32px;
	}

	.code {
		width: 68px;
	}

	.sound {
		width: 28px;
	}

	.sound > button {
		width: 10px;
	}

	.stock {
		display: flex;
		align-items: center;
		width: 83px;
		background: linear-gradient(135deg, transparent 90%, #a0a0a0 90%), #fff;
		color: #800040;
		font-size: 13px;
	}

	.stock b {
		width: 16px;
		height: 18px;
		margin-right: 4px;
		background: #b06464;
		color: #fff;
		font-weight: normal;
		line-height: 18px;
		text-align: center;
	}

	.group button {
		width: 19px;
	}

	.group {
		display: flex;
	}

	.group button + button {
		border-left: 1px solid #a8a8a8;
	}

	.group .on {
		background: #4a80c4;
		color: #fff;
	}

	.count {
		width: 39px;
		margin-left: 1px;
	}

	.count input {
		padding-left: 8px;
	}

	.bars {
		width: 31px;
		padding-left: 1px;
		background: #fff;
		margin-left: 1px;
	}

	.total {
		width: 33px;
		color: #444;
		line-height: 20px;
	}

	.icons svg {
		width: 15px;
	}

	.check {
		display: flex;
		align-items: center;
		gap: 3px;
		margin-left: 1px;
	}

	.check input {
		appearance: none;
		width: 13px;
		height: 13px;
		border: 1px solid #808080;
		background: #fff;
	}

	/* quote row */
	.quote {
		display: flex;
		height: 20px;
		margin: 3px 0;
		padding-left: 1px;
		gap: 2px;
	}

	.cells {
		display: flex;
		box-sizing: border-box;
		border: 1px solid #8a8a8a;
		background: #efefef;
	}

	.cell {
		box-sizing: border-box;
		display: flex;
		align-items: center;
		justify-content: space-between;
		padding: 0 2px;
		white-space: pre;
	}

	.cell + .cell {
		border-left: 1px solid #b0b0b0;
	}

	.cell em {
		color: #1450c8;
	}

	.cell strong {
		color: #e8180c;
	}

	.change {
		width: 173px;
		padding-left: 29px;
	}

	.change .arrow {
		font-size: 13px;
	}

	.change .diff {
		margin-left: 14px;
	}

	.volume {
		width: 171px;
		padding-left: 14px;
	}

	.volume .ratio {
		margin-left: 16px;
	}

	.amount {
		width: 81px;
		justify-content: flex-end;
	}

	.best {
		width: 141px;
		padding: 0 9px 0 3px;
	}

	.ohl {
		width: 183px;
		padding-right: 9px;
	}

	.buy,
	.sell {
		width: 40px;
		border: 1px solid #8a8a8a;
		background: #f4d0ca;
	}

	.sell {
		background: #c8dff4;
	}

	.chart {
		display: block;
		width: 100%;
		height: auto;
	}

	.chart text {
		font-size: 12px;
	}

	.chart .small {
		font-size: 11px;
	}

	.chart .legend {
		font-size: 13px;
	}

	.chart .date {
		font-size: 13px;
		font-weight: bold;
	}

	/* bottom bar */
	.bottom {
		display: flex;
		height: 18px;
		background: #f0f0f0;
	}

	.raised {
		width: 17px;
		box-sizing: border-box;
		border: 1px solid;
		border-color: #fff #707070 #707070 #fff;
		background: #efefef;
		flex: none;
	}

	.track {
		flex: 1;
		display: flex;
		justify-content: flex-end;
		background: #f6f6f6;
	}

	.thumb {
		width: 62%;
		box-sizing: border-box;
		border: 1px solid;
		border-color: #fff #707070 #707070 #909090;
		background: #efefef;
	}

	.speed {
		width: 70px;
		margin: 0 6px;
		background: repeating-linear-gradient(90deg, transparent 0 2px, #333 2px 3px, transparent 3px 8px) bottom / 100% 3px no-repeat;
	}

	.speed input {
		appearance: none;
		display: block;
		width: 100%;
		height: 12px;
		background: linear-gradient(#909090, #909090) center / 100% 2px no-repeat;
	}

	.speed input::-webkit-slider-thumb {
		appearance: none;
		width: 4px;
		height: 11px;
		border: 1px solid #808080;
		background: #eee;
	}

	.draw-tools {
		display: flex;
	}

	.draw-tools button {
		width: 17px;
	}

	.draw-tools svg {
		width: 14px;
		height: 14px;
	}

	.draw-tools .pressed {
		background: #fff;
		box-shadow: inset 1px 1px #aaa;
	}

	.draw-tools .letter {
		font-size: 16px;
		font-weight: bold;
		color: #555;
	}
</style>
